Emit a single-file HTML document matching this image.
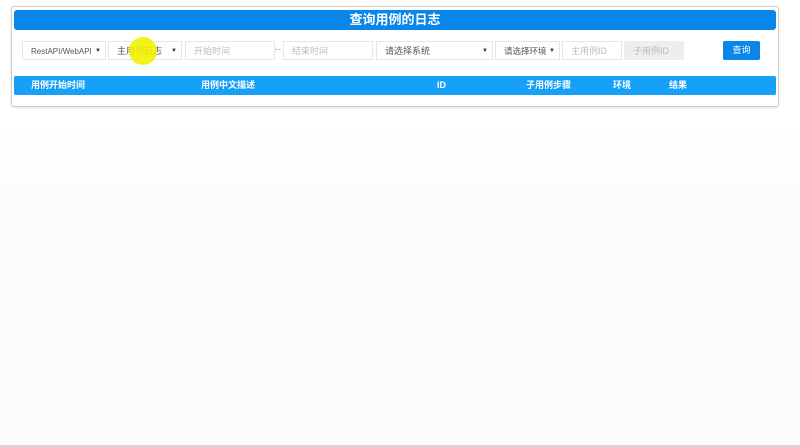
<!DOCTYPE html>
<html><head><meta charset="utf-8"><style>
body{margin:0;width:800px;height:447px;background:#fcfbfe;font-family:"Liberation Sans","Noto Sans CJK SC",sans-serif;position:relative;overflow:hidden}
.top{position:absolute;left:0;top:0;width:800px;height:200px;background:linear-gradient(#fff 60%,#fcfbfe)}
.card{position:absolute;left:11px;top:6px;width:766px;height:99px;border:1px solid #ccc;border-radius:3px;background:#fff;box-shadow:0 1px 2px rgba(0,0,0,.1)}
.title{position:absolute;left:14px;top:10px;width:762px;height:20px;background:#0a85ea;border-radius:3px;color:#fff;font-weight:bold;font-size:13px;text-align:center;line-height:20px}
.c{position:absolute;top:41px;height:19px;border:1px solid #e6e6e6;font-size:9px;color:#555;line-height:19px;box-sizing:border-box;padding-left:8px;background:#fff;white-space:nowrap}
.c.ph{color:#bbb}
.c .a{position:absolute;right:4px;top:0;font-size:6px;color:#333}
.th{position:absolute;left:14px;top:76px;width:762px;height:19px;background:#17a0f7;border-radius:2px;color:#fff;font-size:9px;font-weight:bold;line-height:19px}
.th span{position:absolute}
.btn{position:absolute;left:723px;top:41px;width:37px;height:19px;background:#0a85ea;color:#fff;font-size:9px;text-align:center;line-height:19px;border-radius:2px}
.dot{position:absolute;left:129px;top:37px;width:28px;height:28px;border-radius:50%;background:#f3f200;opacity:.9;z-index:5}
.line{position:absolute;left:0;top:445px;width:800px;height:2px;background:#d8d8d8}
</style></head><body>
<div class="top"></div>
<div class="line"></div>
<div class="card"></div>
<div class="title">查询用例的日志</div>
<div class="c" style="left:22px;width:84px;font-size:8px">RestAPI/WebAPI<span class="a">▼</span></div>
<div class="c" style="left:108px;width:74px">主用例日志<span class="a">▼</span></div>
<div class="dot"></div>
<div class="c ph" style="left:185px;width:90px">开始时间</div>
<span style="position:absolute;left:275px;top:44px;font-size:9px;color:#999">--</span>
<div class="c ph" style="left:283px;width:90px">结束时间</div>
<div class="c" style="left:376px;width:117px">请选择系统<span class="a">▼</span></div>
<div class="c" style="left:495px;width:65px;font-size:8.5px">请选择环境<span class="a">▼</span></div>
<div class="c ph" style="left:562px;width:60px">主用例ID</div>
<div class="c ph" style="left:624px;width:60px;background:#eee;border-color:#eee">子用例ID</div>
<div class="btn">查询</div>
<div class="th">
<span style="left:17px">用例开始时间</span>
<span style="left:187px">用例中文描述</span>
<span style="left:423px">ID</span>
<span style="left:512px">子用例步骤</span>
<span style="left:599px">环境</span>
<span style="left:655px">结果</span>
</div>
</body></html>
